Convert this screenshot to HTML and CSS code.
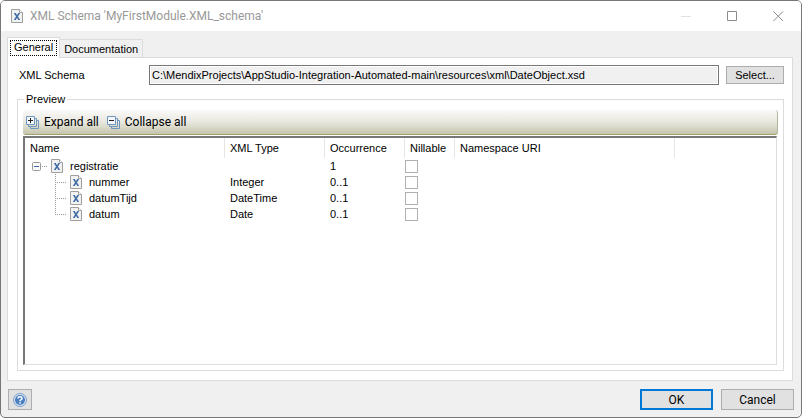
FILE: index.html
```html
<!DOCTYPE html>
<html lang="en">
<head>
<meta charset="utf-8">
<title>XML Schema</title>
<link rel="stylesheet" href="styles.css">
</head>
<body>
<svg class="defs" aria-hidden="true">
  <symbol id="file" viewBox="0 0 12 14">
    <path d="M.5.5H8.500L11.500 3.500V13.500H.5Z" fill="#f1f1f1" stroke="#a0a0a0"/>
    <path d="M8.500.5V3.500H11.500" fill="#fff" stroke="#a0a0a0"/>
    <path d="M3 4.500H5M7 4.500H9M3 10.500H5M7 10.500H9" stroke="#5f86b5"/>
    <path d="M4 4.500L8 10.500M8 4.500L4 10.500" stroke="#3f6ca5" stroke-width="1.500"/>
  </symbol>
  <symbol id="stack" viewBox="0 0 13 13">
    <path d="M4.500 10.500V12.500H12.500V4.500H10.500" fill="none" stroke="#6f98bf"/>
    <path d="M2.500 8.500V10.500H10.500V2.500H8.500" fill="none" stroke="#6f98bf"/>
    <path d="M.5.5H8.500V8.500H.5Z" fill="#f4f8fc" stroke="#6f98bf"/>
  </symbol>
  <symbol id="branch" viewBox="0 0 44 16">
    <path d="M30.500 0V16M32 8.500H42" stroke="#999" stroke-dasharray="1 1" fill="none"/>
  </symbol>
  <symbol id="branch-end" viewBox="0 0 44 16">
    <path d="M30.500 0V9M32 8.500H42" stroke="#999" stroke-dasharray="1 1" fill="none"/>
  </symbol>
</svg>
<div class="window">
  <header class="titlebar">
    <svg class="file"><use href="#file"/></svg>
    <h1>XML Schema 'MyFirstModule.XML_schema'</h1>
    <button class="caption" aria-label="Minimize"><svg viewBox="0 0 11 11"><path d="M0 5.500H10" stroke="#e2e2e2"/></svg></button>
    <button class="caption" aria-label="Maximize"><svg viewBox="0 0 11 11"><path d="M.5.5H9.500V9.500H.5Z" stroke="#8c8c8c" fill="none"/></svg></button>
    <button class="caption" aria-label="Close"><svg viewBox="0 0 11 11"><path d="M.5.5L10 10M10 .5L.5 10" stroke="#8c8c8c"/></svg></button>
  </header>
  <main>
    <div class="tabs" role="tablist">
      <button class="tab active" role="tab" aria-selected="true"><span>General</span></button>
      <button class="tab" role="tab" aria-selected="false">Documentation</button>
    </div>
    <section class="panel">
      <div class="field">
        <label for="schema">XML Schema</label>
        <input id="schema" type="text" readonly value="C:\MendixProjects\AppStudio-Integration-Automated-main\resources\xml\DateObject.xsd">
        <button class="button select">Select...</button>
      </div>
      <fieldset>
        <legend>Preview</legend>
        <div class="toolbar">
          <button><svg viewBox="0 0 13 13"><use href="#stack"/><path d="M2 4.500H7M4.500 2V7" stroke="#222"/></svg>Expand all</button>
          <button><svg viewBox="0 0 13 13"><use href="#stack"/><path d="M2 4.500H7" stroke="#222"/></svg>Collapse all</button>
        </div>
        <div class="list">
          <table>
            <colgroup><col class="c-name"><col class="c-type"><col class="c-occ"><col class="c-nil"><col class="c-uri"><col></colgroup>
            <thead><tr><th>Name</th><th>XML Type</th><th>Occurrence</th><th>Nillable</th><th>Namespace URI</th><td></td></tr></thead>
            <tbody>
              <tr><td><div class="node"><svg class="root" viewBox="0 0 25 16"><rect x="7.500" y="4.500" width="8" height="8" rx="1" fill="#fafafa" stroke="#999"/><path d="M9 8.500H14" stroke="#4664a8"/><path d="M17 8.500H23" stroke="#999" stroke-dasharray="1 1"/></svg><svg class="file"><use href="#file"/></svg>registratie</div></td><td></td><td>1</td><td><input type="checkbox" aria-label="registratie nillable"></td><td></td><td></td></tr>
              <tr><td><div class="node"><svg class="child"><use href="#branch"/></svg><svg class="file"><use href="#file"/></svg>nummer</div></td><td>Integer</td><td>0..1</td><td><input type="checkbox" aria-label="nummer nillable"></td><td></td><td></td></tr>
              <tr><td><div class="node"><svg class="child"><use href="#branch"/></svg><svg class="file"><use href="#file"/></svg>datumTijd</div></td><td>DateTime</td><td>0..1</td><td><input type="checkbox" aria-label="datumTijd nillable"></td><td></td><td></td></tr>
              <tr><td><div class="node"><svg class="child"><use href="#branch-end"/></svg><svg class="file"><use href="#file"/></svg>datum</div></td><td>Date</td><td>0..1</td><td><input type="checkbox" aria-label="datum nillable"></td><td></td><td></td></tr>
            </tbody>
          </table>
        </div>
      </fieldset>
    </section>
    <footer>
      <button class="button help" aria-label="Help"><svg viewBox="0 0 14 14"><circle cx="7" cy="7" r="6.500" fill="#d7e4f3" stroke="#7e9fc8"/><circle cx="7" cy="7" r="5" fill="#4b80c0"/><path d="M5 5.500C5 3.200 9 3.200 9 5.500C9 6.800 7 6.700 7 8.300M7 9.300V10.800" fill="none" stroke="#fff" stroke-width="1.500"/></svg></button>
      <button class="button action ok">OK</button>
      <button class="button action">Cancel</button>
    </footer>
  </main>
</div>
</body>
</html>
```
FILE: styles.css
```css
* { box-sizing: border-box; }
body {
  margin: 0;
  background: #fff;
  color: #000;
  font: 11px/16px "Liberation Sans", Arial, sans-serif;
}
button, input { font: inherit; color: inherit; margin: 0; }
svg { display: block; flex: none; }
.defs { position: absolute; width: 0; height: 0; }
.window {
  min-height: 100vh;
  display: flex;
  flex-direction: column;
  border: 1px solid #777;
  border-radius: 5px;
  overflow: hidden;
  background: #f0f0f0;
}
.titlebar {
  display: flex;
  align-items: center;
  height: 30px;
  padding-left: 10px;
  background: #fff;
}
.file { width: 12px; height: 14px; }
h1 {
  flex: 1;
  margin: 0 0 0 7px;
  color: #999;
  font: 12px/16px Roboto, sans-serif;
}
.caption {
  width: 46px;
  height: 28px;
  padding: 0;
  border: 0;
  background: none;
}
.caption svg { width: 11px; height: 11px; margin: 0 auto; }
main {
  flex: 1;
  display: flex;
  flex-direction: column;
  padding: 6px 7px 7px 6px;
}
.tabs { display: flex; align-items: flex-end; height: 20px; }
.tab {
  height: 18px;
  padding: 0 4px;
  border: 1px solid #dcdcdc;
  border-left: 0;
  border-bottom: 0;
  background: #f0f0f0;
}
.tab.active {
  height: 21px;
  margin-bottom: -1px;
  padding: 2px;
  border-left: 1px solid #dcdcdc;
  background: #fff;
  z-index: 1;
}
.tab.active span {
  display: block;
  height: 16px;
  padding: 0 3px;
  border: 1px dotted #000;
  line-height: 13px;
}
.panel {
  flex: 1;
  display: flex;
  flex-direction: column;
  gap: 7px;
  margin-right: 1px;
  padding: 7px 8px 9px 9px;
  border: 1px solid #dcdcdc;
  background: #fff;
}
.field { display: flex; align-items: center; }
.field label { width: 132px; padding-left: 2px; }
.field input {
  flex: 1;
  min-width: 0;
  height: 20px;
  margin-right: 7px;
  padding: 0 2px;
  border: 1px solid #777;
  outline: 1px solid #fff;
  outline-offset: -2px;
  background: #f0f0f0;
}
.button {
  height: 21px;
  padding: 0;
  border: 1px solid #adadad;
  background: #e1e1e1;
}
.button.select { width: 58px; height: 18px; line-height: 16px; }
fieldset {
  flex: 1;
  min-width: 0;
  margin: 0;
  padding: 4px 5px 5px;
  border: 1px solid #dcdcdc;
}
legend { margin-left: 1px; padding: 0 2px; line-height: 14px; }
.toolbar {
  display: flex;
  align-items: center;
  gap: 8px;
  height: 25px;
  margin-bottom: 1px;
  padding-left: 3px;
  border-bottom: 1px solid #a0a070;
  border-right: 1px solid #b5b59b;
  border-radius: 3px;
  background: linear-gradient(#fafaf8, #e8e7df 50%, #c6c5ad);
}
.toolbar button {
  display: flex;
  align-items: center;
  gap: 5px;
  padding: 0;
  border: 0;
  background: none;
  font: 12px/16px Roboto, sans-serif;
}
.toolbar svg { width: 13px; height: 13px; }
.list {
  min-height: calc(100vh - 189px);
  margin-right: 1px;
  border: 1px solid #dfdfdf;
  border-top: 2px solid #777;
  border-left: 2px solid #777;
}
table { width: 100%; border-spacing: 0; table-layout: fixed; }
.c-name { width: 200px; }
.c-type { width: 100px; }
.c-occ { width: 80px; }
.c-nil { width: 50px; }
.c-uri { width: 220px; }
th { height: 20px; padding: 0 0 0 5px; border-right: 1px solid #e5e5e5; font-weight: 400; text-align: left; }
td { height: 16px; padding: 0 0 0 5px; }
td:first-child { padding: 0; }
.node { display: flex; align-items: center; gap: 1px; }
.node .file { margin-right: 6px; }
.root { width: 25px; height: 16px; }
.child { width: 44px; height: 16px; }
td input {
  display: block;
  appearance: none;
  width: 13px;
  height: 13px;
  margin-left: -5px;
  border: 1px solid #b0b0b0;
}
footer { display: flex; gap: 8px; padding: 8px 0 0 1px; }
.help { width: 24px; margin-right: auto; }
.help svg { width: 14px; height: 14px; margin: 0 auto; }
.action { width: 73px; font: 12px/16px Roboto, sans-serif; }
.ok { border: 2px solid #0078d7; }
```
